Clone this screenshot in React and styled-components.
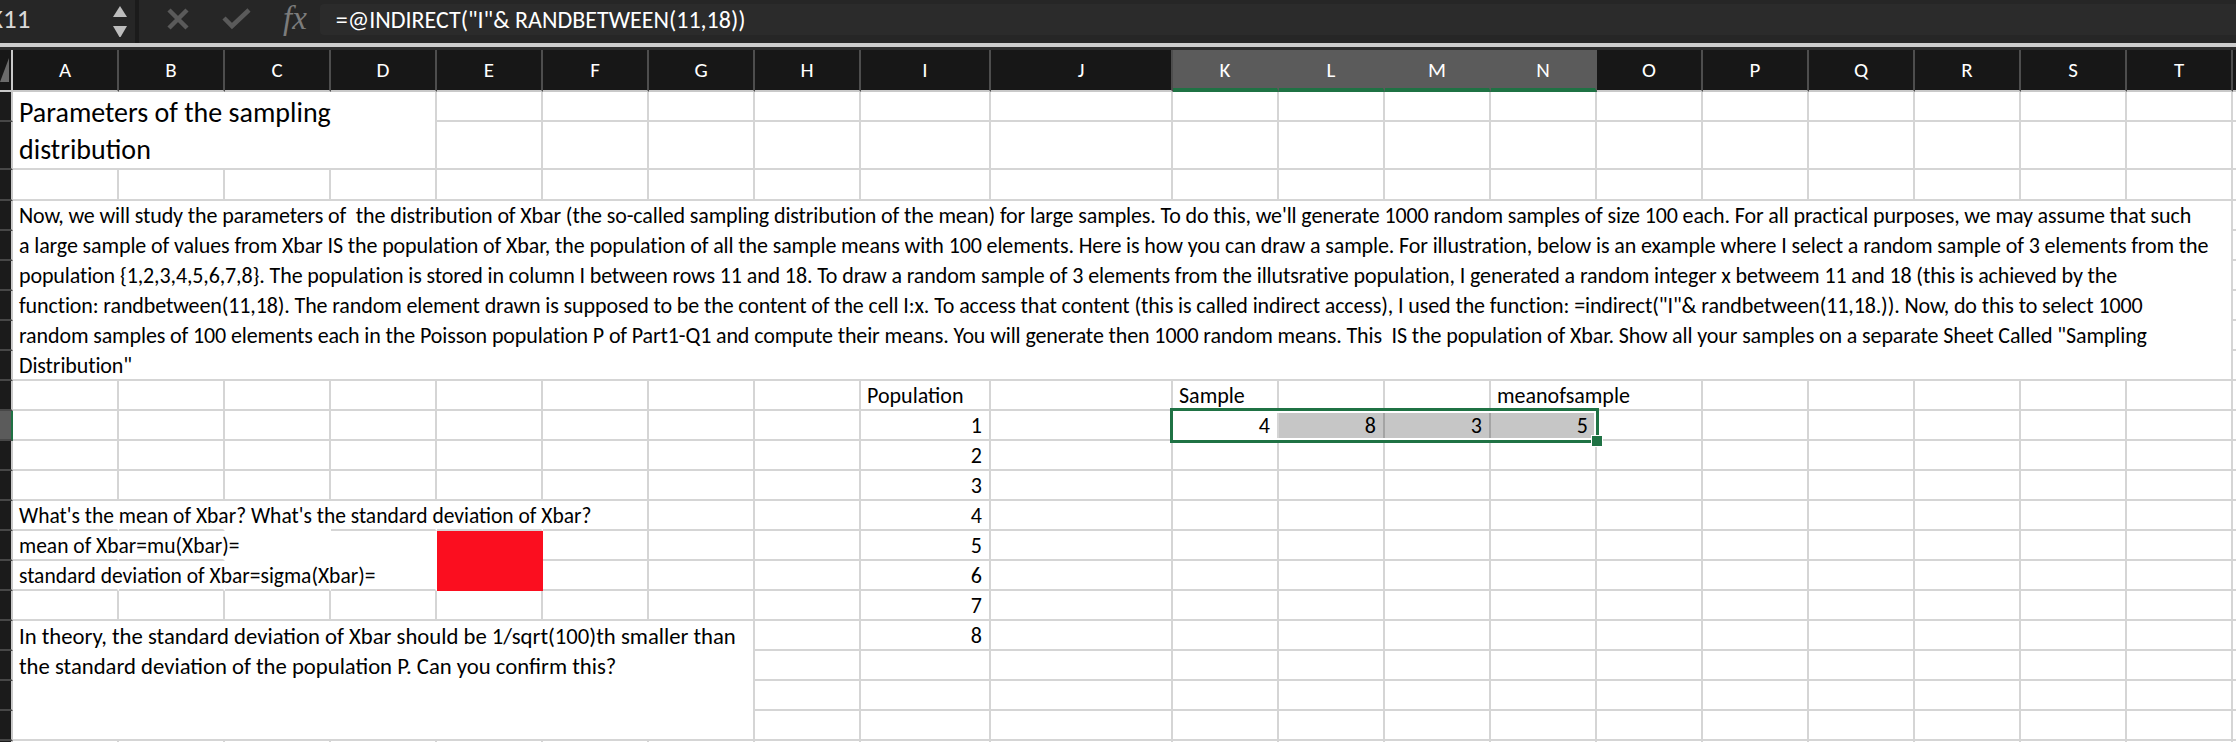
import React from "react";
import styled, { createGlobalStyle } from "styled-components";

const FONT = `Carlito, Lato, "Open Sans", sans-serif`;
const GRID = "#d5d5d5";
const GREEN = "#1f7244";
const RED = "#fb0e1f";

const COLS = "ABCDEFGHIJKLMNOPQRSTU".split("");
const ROWS = 22;

const paragraph = [
  "Now, we will study the parameters of  the distribution of Xbar (the so-called sampling distribution of the mean) for large samples. To do this, we'll generate 1000 random samples of size 100 each. For all practical purposes, we may assume that such",
  "a large sample of values from Xbar IS the population of Xbar, the population of all the sample means with 100 elements. Here is how you can draw a sample. For illustration, below is an example where I select a random sample of 3 elements from the",
  "population {1,2,3,4,5,6,7,8}. The population is stored in column I between rows 11 and 18. To draw a random sample of 3 elements from the illutsrative population, I generated a random integer x betweem 11 and 18 (this is achieved by the",
  'function: randbetween(11,18). The random element drawn is supposed to be the content of the cell I:x. To access that content (this is called indirect access), I used the function: =indirect("I"& randbetween(11,18.)). Now, do this to select 1000',
  'random samples of 100 elements each in the Poisson population P of Part1-Q1 and compute their means. You will generate then 1000 random means. This  IS the population of Xbar. Show all your samples on a separate Sheet Called "Sampling',
  'Distribution"',
];

const merges = {
  A1: { cs: 4, rs: 2, kind: "title", lines: ["Parameters of the sampling", "distribution"] },
  A4: { cs: 20, rs: 6, kind: "para", lines: paragraph },
  A18: {
    cs: 7,
    rs: 4,
    kind: "note",
    lines: [
      "In theory, the standard deviation of Xbar should be 1/sqrt(100)th smaller than",
      "the standard deviation of the population P. Can you confirm this?",
    ],
  },
};

const values = {
  I10: { text: "Population" },
  K10: { text: "Sample" },
  N10: { text: "meanofsample", noRight: true },
  K11: { text: "4", num: true, selected: true },
  L11: { text: "8", num: true, fill: "#c6c6c6", line: "#a4a4a4" },
  M11: { text: "3", num: true, fill: "#c6c6c6", line: "#a4a4a4" },
  N11: { text: "5", num: true, fill: "#c6c6c6", line: "#a4a4a4" },
  A14: { text: "What's the mean of Xbar? What's the standard deviation of Xbar?", noRight: true, small: true },
  B14: { noRight: true },
  C14: { noRight: true, noBottom: true },
  D14: { noRight: true },
  E14: { noRight: true },
  A15: { text: "mean of Xbar=mu(Xbar)=", noRight: true, small: true },
  B15: { noRight: true },
  C15: { noRight: true, noBottom: true },
  D15: { noRight: true, noBottom: true },
  E15: { fill: RED, noRight: true, noBottom: true },
  A16: { text: "standard deviation of Xbar=sigma(Xbar)=", noRight: true, small: true },
  B16: { noRight: true },
  C16: { noRight: true },
  D16: { noRight: true },
  E16: { fill: RED, noRight: true, noBottom: true },
};
for (let i = 1; i <= 8; i++) values[`I${10 + i}`] = { text: String(i), num: true };

const covered = new Set();
Object.entries(merges).forEach(([ref, m]) => {
  const c0 = COLS.indexOf(ref[0]);
  const r0 = Number(ref.slice(1));
  for (let r = r0; r < r0 + m.rs; r++)
    for (let c = c0; c < c0 + m.cs; c++) if (r !== r0 || c !== c0) covered.add(`${COLS[c]}${r}`);
});

const GlobalStyle = createGlobalStyle`
  html, body { margin: 0; padding: 0; background: #fff; overflow: hidden; }
  body { font-family: ${FONT}; -webkit-font-smoothing: antialiased; }
`;

const Window = styled.div`
  width: 2236px;
  height: 742px;
  display: flex;
  flex-direction: column;
  overflow: hidden;
  background: #fff;
`;

const FormulaBar = styled.div`
  flex: none;
  height: 37px;
  padding-bottom: 6px;
  display: flex;
  align-items: center;
  background: #262626;
  border-bottom: 4px solid #cdcdcd;
`;

const NameBox = styled.div`
  width: 135px;
  height: 100%;
  display: flex;
  align-items: center;
  overflow: hidden;
`;

const NameText = styled.span`
  margin-left: -11px;
  font-size: 27px;
  color: #d9d9d9;
`;

const Stepper = styled.svg`
  margin-left: auto;
  margin-right: 7px;
  margin-top: 6px;
`;

const Divider = styled.div`
  width: 4px;
  align-self: stretch;
  margin-bottom: -6px;
  background: #1b1b1b;
`;

const ToolIcon = styled.svg`
  flex: none;
  margin-left: ${(p) => p.$gap}px;
`;

const Fx = styled.span`
  margin-left: 31px;
  font-family: "Liberation Serif", "DejaVu Serif", serif;
  font-style: italic;
  font-size: 33px;
  color: #7c7c7c;
  line-height: 1;
`;

const FormulaInput = styled.div`
  flex: 1;
  margin-left: 13px;
  height: 31px;
  margin-top: 2px;
  padding-left: 16px;
  display: flex;
  align-items: center;
  background: #2b2b2b;
  border-radius: 4px 0 0 4px;
  font-size: 24px;
  color: #fff;
  white-space: pre;
`;

const Sheet = styled.div`
  flex: none;
  display: grid;
  grid-template-columns: 13px repeat(8, 106px) 130px 182px repeat(10, 106px) 1fr;
  grid-template-rows: 42px 30px 48px 31px repeat(19, 30px);
  border-top: 3px solid #2d2d2d;
`;

const Corner = styled.div`
  background: #171717;
  border-right: 2px solid #c9c9c9;
  border-bottom: 2px solid #c9c9c9;
  display: flex;
  align-items: flex-end;
  padding-bottom: 8px;
  box-sizing: border-box;
`;

const ColHead = styled.div`
  box-sizing: border-box;
  display: flex;
  align-items: center;
  justify-content: center;
  background: ${(p) => (p.$sel ? "#5b5b5b" : "#171717")};
  color: #fff;
  font-size: 21px;
  border-right: 2px solid ${(p) => (p.$sel ? "#5b5b5b" : "#4d4d4d")};
  border-bottom: ${(p) => (p.$sel ? `4px solid ${GREEN}` : "2px solid #c9c9c9")};
  padding-top: ${(p) => (p.$sel ? "2px" : "0")};
`;

const RowHead = styled.div`
  box-sizing: border-box;
  background: ${(p) => (p.$sel ? "#5b5b5b" : "#1b1b1b")};
  border-bottom: 2px solid #474747;
  border-right: 2px solid ${(p) => (p.$sel ? GREEN : "#c9c9c9")};
`;

const Cell = styled.div`
  grid-column: span ${(p) => p.$cs || 1};
  grid-row: span ${(p) => p.$rs || 1};
  box-sizing: border-box;
  min-width: 0;
  background: ${(p) => p.$fill || "transparent"};
  border-right: 2px solid ${(p) => (p.$noRight ? "transparent" : p.$line || GRID)};
  border-bottom: 2px solid ${(p) => (p.$noBottom ? "transparent" : GRID)};
  padding: 0 7px 0 6px;
  font-size: ${(p) => (p.$small ? "21.5px" : "22px")};
  line-height: 30px;
  color: #000;
  white-space: pre;
  text-align: ${(p) => (p.$num ? "right" : "left")};
`;

const ActiveCell = styled(Cell)`
  position: relative;
`;

const TitleCell = styled(Cell)`
  font-size: 28px;
  line-height: 37px;
  padding-top: 2px;
`;

const ParaCell = styled(Cell)`
  letter-spacing: -0.12px;
`;

const NoteCell = styled(Cell)`
  font-size: 22.7px;
`;

const Line = styled.div`
  white-space: pre;
`;

const Selection = styled.div`
  position: absolute;
  left: -3px;
  top: -3px;
  width: 429px;
  height: 35px;
  box-sizing: border-box;
  border: 3px solid ${GREEN};
  box-shadow: inset 0 0 0 2px #fff;
  pointer-events: none;
  z-index: 2;
`;

const Handle = styled.div`
  position: absolute;
  right: -7px;
  bottom: -7px;
  width: 10px;
  height: 10px;
  background: ${GREEN};
  border: 1px solid #fff;
`;

const mergedKinds = { title: TitleCell, para: ParaCell, note: NoteCell };

function renderCell(col, row) {
  const ref = `${col}${row}`;
  if (covered.has(ref)) return null;
  const m = merges[ref];
  if (m) {
    const Comp = mergedKinds[m.kind];
    return (
      <Comp key={ref} $cs={m.cs} $rs={m.rs}>
        {m.lines.map((l, i) => (
          <Line key={i}>{l}</Line>
        ))}
      </Comp>
    );
  }
  const v = values[ref] || {};
  const Comp = v.selected ? ActiveCell : Cell;
  return (
    <Comp
      key={ref}
      $num={v.num}
      $small={v.small}
      $fill={v.fill}
      $line={v.line}
      $noRight={v.noRight}
      $noBottom={v.noBottom}
    >
      {v.text}
      {v.selected && (
        <Selection>
          <Handle />
        </Selection>
      )}
    </Comp>
  );
}

export default function App() {
  const rows = [];
  for (let r = 1; r <= ROWS; r++) {
    rows.push(<RowHead key={`h${r}`} $sel={r === 11} />);
    COLS.forEach((c) => rows.push(renderCell(c, r)));
  }

  return (
    <Window>
      <GlobalStyle />
      <FormulaBar>
        <NameBox>
          <NameText>K11</NameText>
          <Stepper width="16" height="34" viewBox="0 0 16 34">
            <polygon points="8,1 15,12 1,12" fill="#bdbdbd" />
            <polygon points="1,21 15,21 8,33" fill="#bdbdbd" />
          </Stepper>
        </NameBox>
        <Divider />
        <ToolIcon $gap={27} width="24" height="22" viewBox="0 0 24 22">
          <path d="M3 2 L21 20 M21 2 L3 20" stroke="#5a5a5a" strokeWidth="4.5" />
        </ToolIcon>
        <ToolIcon $gap={31} width="31" height="22" viewBox="0 0 31 22">
          <polyline points="3,10 11,18 28,2" fill="none" stroke="#5a5a5a" strokeWidth="4.5" />
        </ToolIcon>
        <Fx>fx</Fx>
        <FormulaInput>=@INDIRECT("I"&amp; RANDBETWEEN(11,18))</FormulaInput>
      </FormulaBar>
      <Sheet>
        <Corner>
          <svg width="9" height="24" viewBox="0 0 9 24">
            <polygon points="9,0 9,24 0,24" fill="#6b6b6b" />
          </svg>
        </Corner>
        {COLS.map((c) => (
          <ColHead key={c} $sel={["K", "L", "M", "N"].includes(c)}>
            {c === "U" ? "" : c}
          </ColHead>
        ))}
        {rows}
      </Sheet>
    </Window>
  );
}
